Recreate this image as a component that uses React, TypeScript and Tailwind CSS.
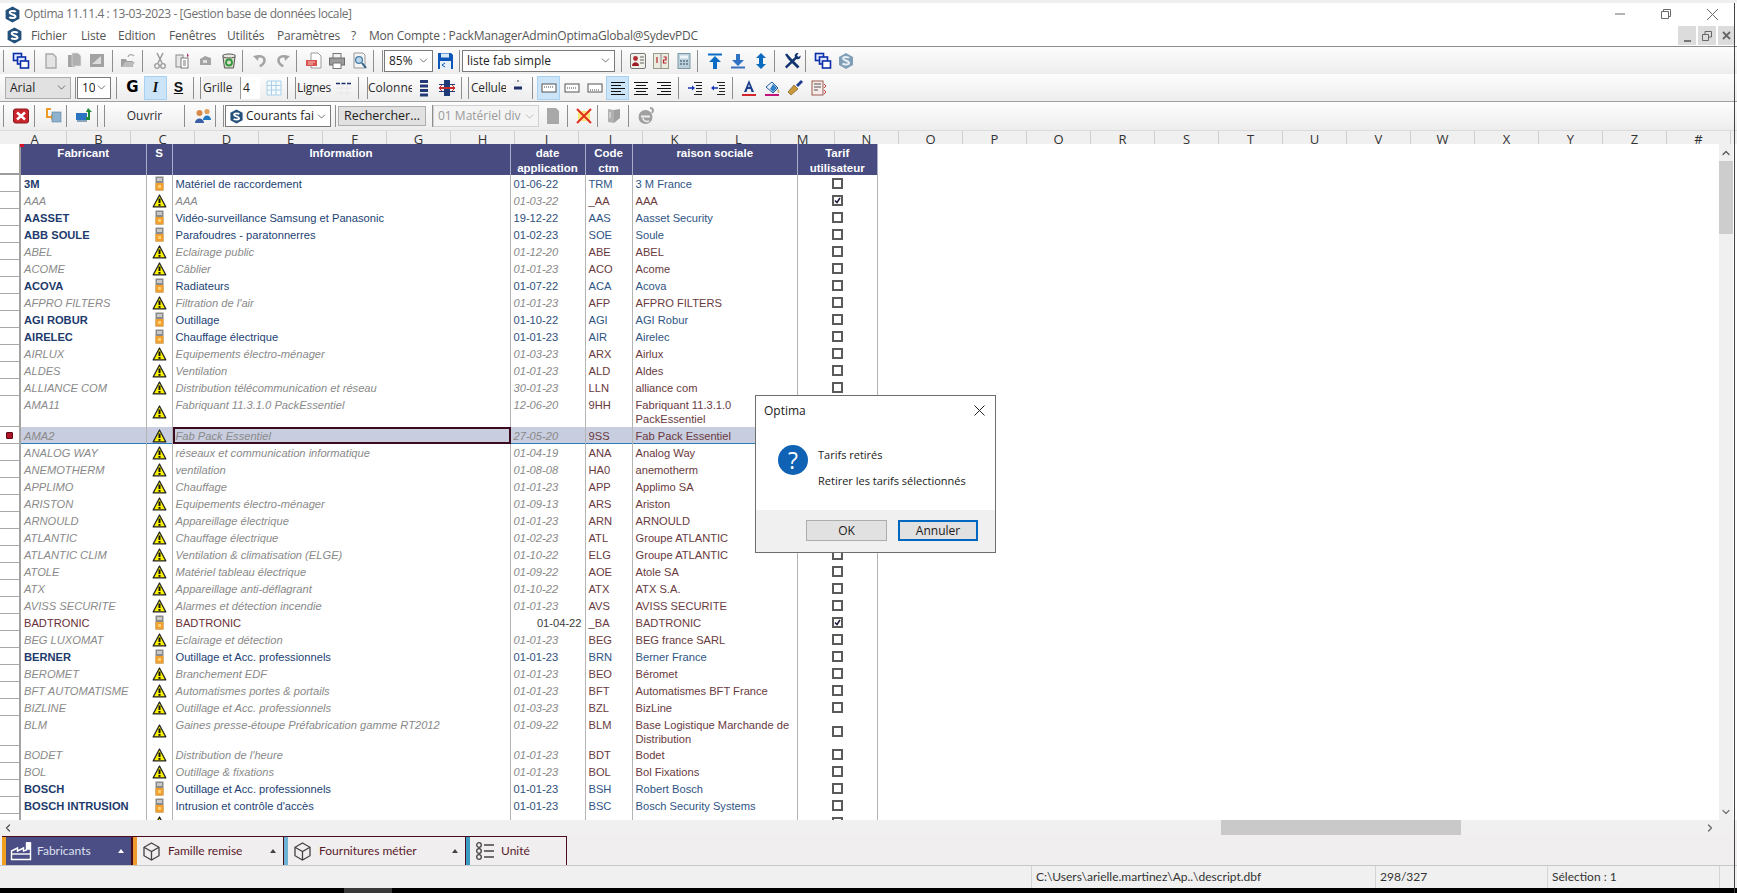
import type { ReactNode } from "react";
import { ChevronDown, ChevronLeft, ChevronRight, ChevronUp } from "lucide-react";

type Kind = "active" | "off" | "bad";

interface Row {
  name: string;
  info: string;
  date: string;
  code: string;
  raison: string;
  kind: Kind;
  checked?: boolean;
  height?: string;
  selected?: boolean;
}

const r = (name: string, info: string, date: string, code: string, raison: string, kind: Kind = "off", extra: Partial<Row> = {}): Row => ({
  name, info, date, code, raison, kind, ...extra,
});

const ROWS: Row[] = [
  r("3M", "Matériel de raccordement", "01-06-22", "TRM", "3 M France", "active"),
  r("AAA", "AAA", "01-03-22", "_AA", "AAA", "off", { checked: true }),
  r("AASSET", "Vidéo-surveillance Samsung et Panasonic", "19-12-22", "AAS", "Aasset Security", "active"),
  r("ABB SOULE", "Parafoudres - paratonnerres", "01-02-23", "SOE", "Soule", "active"),
  r("ABEL", "Eclairage public", "01-12-20", "ABE", "ABEL"),
  r("ACOME", "Câblier", "01-01-23", "ACO", "Acome"),
  r("ACOVA", "Radiateurs", "01-07-22", "ACA", "Acova", "active"),
  r("AFPRO FILTERS", "Filtration de l'air", "01-01-23", "AFP", "AFPRO FILTERS"),
  r("AGI ROBUR", "Outillage", "01-10-22", "AGI", "AGI Robur", "active"),
  r("AIRELEC", "Chauffage électrique", "01-01-23", "AIR", "Airelec", "active"),
  r("AIRLUX", "Equipements électro-ménager", "01-03-23", "ARX", "Airlux"),
  r("ALDES", "Ventilation", "01-01-23", "ALD", "Aldes"),
  r("ALLIANCE COM", "Distribution télécommunication et réseau", "30-01-23", "LLN", "alliance com"),
  r("AMA11", "Fabriquant 11.3.1.0 PackEssentiel", "12-06-20", "9HH", "Fabriquant 11.3.1.0 PackEssentiel", "off", { height: "h-[31px]" }),
  r("AMA2", "Fab Pack Essentiel", "27-05-20", "9SS", "Fab Pack Essentiel", "off", { selected: true }),
  r("ANALOG WAY", "réseaux et communication informatique", "01-04-19", "ANA", "Analog Way"),
  r("ANEMOTHERM", "ventilation", "01-08-08", "HA0", "anemotherm"),
  r("APPLIMO", "Chauffage", "01-01-23", "APP", "Applimo SA"),
  r("ARISTON", "Equipements électro-ménager", "01-09-13", "ARS", "Ariston"),
  r("ARNOULD", "Appareillage électrique", "01-01-23", "ARN", "ARNOULD"),
  r("ATLANTIC", "Chauffage électrique", "01-02-23", "ATL", "Groupe ATLANTIC"),
  r("ATLANTIC CLIM", "Ventilation & climatisation (ELGE)", "01-10-22", "ELG", "Groupe ATLANTIC"),
  r("ATOLE", "Matériel tableau électrique", "01-09-22", "AOE", "Atole SA"),
  r("ATX", "Appareillage anti-déflagrant", "01-10-22", "ATX", "ATX S.A."),
  r("AVISS SECURITE", "Alarmes et détection incendie", "01-01-23", "AVS", "AVISS SECURITE"),
  r("BADTRONIC", "BADTRONIC", "01-04-22", "_BA", "BADTRONIC", "bad", { checked: true }),
  r("BEG LUXOMAT", "Eclairage et détection", "01-01-23", "BEG", "BEG france SARL"),
  r("BERNER", "Outillage et Acc. professionnels", "01-01-23", "BRN", "Berner France", "active"),
  r("BEROMET", "Branchement EDF", "01-01-23", "BEO", "Béromet"),
  r("BFT AUTOMATISME", "Automatismes portes & portails", "01-01-23", "BFT", "Automatismes BFT France"),
  r("BIZLINE", "Outillage et Acc. professionnels", "01-03-23", "BZL", "BizLine"),
  r("BLM", "Gaines presse-étoupe Préfabrication gamme RT2012", "01-09-22", "BLM", "Base Logistique Marchande de Distribution", "off", { height: "h-[30px]" }),
  r("BODET", "Distribution de l'heure", "01-01-23", "BDT", "Bodet"),
  r("BOL", "Outillage & fixations", "01-01-23", "BOL", "Bol Fixations"),
  r("BOSCH", "Outillage et Acc. professionnels", "01-01-23", "BSH", "Robert Bosch", "active"),
  r("BOSCH INTRUSION", "Intrusion et contrôle d'accès", "01-01-23", "BSC", "Bosch Security Systems", "active"),
  r("", "", "", "", ""),
];

const LETTERS = "ABCDEFGHIJKLMNOPQRSTUVWXYZ#".split("");
const MENU: [string, string][] = [
  ["Fichier", "w-[50px]"],
  ["Liste", "w-[37px]"],
  ["Edition", "w-[51px]"],
  ["Fenêtres", "w-[58px]"],
  ["Utilités", "w-[50px]"],
  ["Paramètres", "w-[74px]"],
  ["?", "w-[18px]"],
  ["Mon Compte : PackManagerAdminOptimaGlobal@SydevPDC", ""],
];

function Logo({ size = 17 }: { size?: number }) {
  return (
    <svg width={size} height={size} viewBox="0 0 16 16">
      <path d="M8 0.5 14.5 4v8L8 15.5 1.5 12V4z" fill="#24507c" />
      <path d="M11 5.6C10 4.4 5.4 4.3 5.4 6.2 5.4 8.3 10.8 7.6 10.8 9.9 10.8 11.8 6.2 11.7 5 10.4" fill="none" stroke="#fff" strokeWidth="1.9" />
    </svg>
  );
}

const Svg = ({ children }: { children: ReactNode }) => (
  <svg width="18" height="18" viewBox="0 0 18 18">{children}</svg>
);

const I = {
  windows: (
    <Svg>
      <rect x="1.5" y="1.5" width="8" height="7" fill="#dfe8ff" stroke="#0b2ea8" strokeWidth="1.6" />
      <rect x="5.5" y="5" width="8" height="7" fill="#dfe8ff" stroke="#0b2ea8" strokeWidth="1.6" />
      <rect x="8.5" y="9" width="8" height="7" fill="#fff" stroke="#0b2ea8" strokeWidth="1.6" />
    </Svg>
  ),
  doc: (
    <Svg>
      <path d="M4 2h7l3 3v11H4z" fill="#e4e4e4" stroke="#a9a9a9" strokeWidth="1.4" />
    </Svg>
  ),
  copy: (
    <Svg>
      <path d="M3 3h7v12H3z" fill="#a3a3a3" />
      <path d="M7 1h6l3 3v10H7z" fill="#b0b0b0" stroke="#e8e8e8" strokeWidth=".6" />
    </Svg>
  ),
  save: (
    <Svg>
      <rect x="2" y="2" width="14" height="13" fill="#a2a2a2" />
      <path d="M4 12 13 4v8z" fill="#dcdcdc" />
    </Svg>
  ),
  open: (
    <Svg>
      <path d="M2 7h5l1 2h6v6H2z" fill="#a0a0a0" />
      <path d="M3 15l3-5h10l-3 5z" fill="#bcbcbc" />
      <path d="M9 5c1-3 4-3 6-1" fill="none" stroke="#a8a8a8" strokeWidth="1.3" />
    </Svg>
  ),
  cut: (
    <Svg>
      <path d="M6 1l5 10M12 1 7 11" stroke="#9a9a9a" strokeWidth="1.5" />
      <circle cx="6" cy="14" r="2.3" fill="none" stroke="#9a9a9a" strokeWidth="1.3" />
      <circle cx="12" cy="14" r="2.3" fill="none" stroke="#9a9a9a" strokeWidth="1.3" />
    </Svg>
  ),
  paste: (
    <Svg>
      <rect x="2" y="3" width="7" height="12" fill="#e8e8e8" stroke="#8a8a8a" />
      <rect x="7" y="6" width="7" height="10" fill="#fff" stroke="#7a7a7a" />
      <path d="M9 9h3M9 11h3M9 13h3" stroke="#777" />
      <path d="M13 1l2 3-2 1z" fill="#b03070" />
    </Svg>
  ),
  cam: (
    <Svg>
      <path d="M3 7l5-3 6 2v7H3z" fill="#a4a4a4" />
      <rect x="6" y="8" width="4" height="3" fill="#e0e0e0" />
    </Svg>
  ),
  recycle: (
    <Svg>
      <path d="M3 5h12l-1.5 11h-9z" fill="#dcdcc8" stroke="#555" />
      <ellipse cx="9" cy="4" rx="6.5" ry="2" fill="#e8e8dc" stroke="#555" />
      <circle cx="9" cy="10.5" r="3" fill="none" stroke="#2f9a3e" strokeWidth="1.8" />
    </Svg>
  ),
  undo: (
    <Svg>
      <path d="M5 5.5c5-3 10 0 8 5-1 2-3 3-4 4" fill="none" stroke="#a4a4a4" strokeWidth="2.6" />
      <path d="M2 4l6-1-1 6z" fill="#a4a4a4" />
    </Svg>
  ),
  redo: (
    <Svg>
      <path d="M13 5.5c-5-3-10 0-8 5 1 2 3 3 4 4" fill="none" stroke="#a4a4a4" strokeWidth="2.6" />
      <path d="M16 4l-6-1 1 6z" fill="#a4a4a4" />
    </Svg>
  ),
  pdf: (
    <Svg>
      <path d="M6 1h7l3 3v12H6z" fill="#fff" stroke="#9b9b9b" />
      <rect x="1" y="8" width="11" height="6" fill="#d9534f" />
      <path d="M3 10h7M3 12h5" stroke="#f7c5c3" strokeWidth="1" />
    </Svg>
  ),
  print: (
    <Svg>
      <rect x="5" y="1.5" width="8" height="5" fill="#f2f2f2" stroke="#777" />
      <rect x="1.5" y="6" width="15" height="7" fill="#9b9b9b" stroke="#6d6d6d" />
      <rect x="5" y="11" width="8" height="5.5" fill="#fff" stroke="#777" />
    </Svg>
  ),
  preview: (
    <Svg>
      <path d="M3 1h9l2 2v13H3z" fill="#f5f5f5" stroke="#999" />
      <circle cx="8" cy="8" r="3.4" fill="#bcd6ea" stroke="#4b7fa8" strokeWidth="1.3" />
      <path d="M11 11l4 5" stroke="#2c5d86" strokeWidth="2" />
    </Svg>
  ),
  floppy: (
    <Svg>
      <path d="M2 1h13l2 2v14H2z" fill="#0e55b8" />
      <rect x="5" y="1.5" width="8" height="4" fill="#d7ebf7" />
      <rect x="4" y="9" width="11" height="8" fill="#e6f1fa" />
      <path d="M9 11l-3 2 3 2" fill="none" stroke="#0e55b8" />
    </Svg>
  ),
  card: (
    <Svg>
      <rect x="1.5" y="1.5" width="15" height="15" rx="1.5" fill="#f0efe8" stroke="#777" />
      <path d="M11 5h4M11 8h4M11 11h4" stroke="#666" />
      <circle cx="6.5" cy="6.5" r="2.4" fill="#b12c35" />
      <path d="M3 14c0-5 7-5 7 0z" fill="#9c1d26" />
    </Svg>
  ),
  book: (
    <Svg>
      <rect x="1.5" y="1.5" width="15" height="15" fill="#ecebe0" stroke="#9a9a8a" />
      <path d="M9 2v14" stroke="#888" />
      <path d="M5 5v6M11.5 5h2.5v3h-2.5v3h3" fill="none" stroke="#b3262e" strokeWidth="1.2" />
    </Svg>
  ),
  calc: (
    <Svg>
      <rect x="3" y="1.5" width="12" height="15" fill="#bcd0dc" stroke="#7f98a8" />
      <rect x="5" y="3.5" width="8" height="3" fill="#eef5f8" />
      <path d="M5 9h2M8 9h2M11 9h2M5 12h2M8 12h2M11 12h2" stroke="#5c7484" strokeWidth="1.4" />
    </Svg>
  ),
  top: (
    <Svg>
      <path d="M2 2.5h14" stroke="#0a6cc4" strokeWidth="2" />
      <path d="M9 4l6 6h-4v7H7v-7H3z" fill="#0a6cc4" />
    </Svg>
  ),
  bottom: (
    <Svg>
      <path d="M2 15.5h14" stroke="#3a6fc0" strokeWidth="2" />
      <path d="M9 14l6-6h-4V2H7v6H3z" fill="#2f72c4" />
    </Svg>
  ),
  updown: (
    <Svg>
      <path d="M9 1l5 5h-3v6h3l-5 5-5-5h3V6H4z" fill="#0b6bbf" />
    </Svg>
  ),
  tools: (
    <Svg>
      <path d="M2 2.500 4 1.500 7 5 16.500 14.500 14.500 16.500 5 7z" fill="#12346e" />
      <path d="M15.500 1c-2.500-.5-4.500 1.500-3.500 4L2 14.500 3.500 16.500 13.500 7c2.500 1 4.500-1 4-3.500L15.500 5 14 3.500z" fill="#12346e" />
    </Svg>
  ),
  logoGray: (
    <Svg>
      <path d="M9 1l7 4v8l-7 4-7-4V5z" fill="#7f9fb8" />
      <path d="M12 6c-1-1.5-6-1.5-6 .5s6 2 6 4.500c0 2-5 2-6.500.5" fill="none" stroke="#e9f0f5" strokeWidth="2" />
    </Svg>
  ),
  grid: (
    <Svg>
      <path d="M2 2h14v14H2zM2 6.500h14M2 11h14M6.500 2v14M11 2v14" fill="#f5fafd" stroke="#a8d0ea" strokeWidth="1" />
    </Svg>
  ),
  lignes: (
    <Svg>
      <path d="M1 14h16M6 5v12M12 5v12M1 9h16" stroke="#e8e8e8" />
      <path d="M1 4.500h16" stroke="#1a2e6e" strokeWidth="1.500" strokeDasharray="4 1.500" />
    </Svg>
  ),
  colonne: (
    <Svg>
      <path d="M5 1h8v3H5zM5 5.500h8v3H5zM5 10h8v3H5zM5 14.500h8v3H5z" fill="#243a78" />
    </Svg>
  ),
  colonne2: (
    <Svg>
      <path d="M6 1h6v16H6z" fill="#1f3a78" />
      <path d="M1 5.500h16M1 12.500h16" stroke="#1f3a78" />
      <path d="M2 9h14" stroke="#c72c2c" strokeWidth="2" />
      <path d="M4 6l-3 3 3 3M14 6l3 3-3 3" fill="none" stroke="#c72c2c" />
    </Svg>
  ),
  cellule: (
    <Svg>
      <path d="M1 5h16M1 13h16M6 1v16M12 1v16" stroke="#ececec" />
      <rect x="5" y="7.500" width="8" height="3" fill="#1f2f6e" />
      <path d="M8 2h2" stroke="#333" />
    </Svg>
  ),
  box1: (
    <Svg>
      <rect x="2" y="5" width="14" height="8" fill="#fff" stroke="#555" />
      <path d="M4 8h10" stroke="#444" strokeDasharray="1 1" />
    </Svg>
  ),
  box2: (
    <Svg>
      <rect x="2" y="5" width="14" height="8" fill="#fff" stroke="#555" />
      <path d="M4 9h10" stroke="#444" strokeDasharray="1 1" />
    </Svg>
  ),
  box3: (
    <Svg>
      <rect x="2" y="5" width="14" height="8" fill="#fff" stroke="#555" />
      <path d="M4 11h10" stroke="#444" strokeDasharray="1 1" />
    </Svg>
  ),
  left: (
    <Svg>
      <path d="M2 3.500h14M2 6.500h10M2 9.500h14M2 12.500h10M2 15.500h14" stroke="#111" />
    </Svg>
  ),
  center: (
    <Svg>
      <path d="M2 3.500h14M4 6.500h10M2 9.500h14M4 12.500h10M2 15.500h14" stroke="#111" />
    </Svg>
  ),
  right: (
    <Svg>
      <path d="M2 3.500h14M6 6.500h10M2 9.500h14M6 12.500h10M2 15.500h14" stroke="#111" />
    </Svg>
  ),
  indent: (
    <Svg>
      <path d="M8 3.500h8M10 6.500h6M10 9.500h6M10 12.500h6M8 15.500h8" stroke="#222" />
      <path d="M2 9h5" stroke="#1236b8" strokeWidth="1.500" />
      <path d="M6 6.500 9 9l-3 2.500z" fill="#1236b8" />
    </Svg>
  ),
  outdent: (
    <Svg>
      <path d="M8 3.500h8M10 6.500h6M10 9.500h6M10 12.500h6M8 15.500h8" stroke="#222" />
      <path d="M4 9h5" stroke="#1236b8" strokeWidth="1.500" />
      <path d="M5 6.500 2 9l3 2.500z" fill="#1236b8" />
    </Svg>
  ),
  fontA: (
    <Svg>
      <path d="M9 1 4 13h2.500l1-3h3l1 3H14zM8.200 8 9 5l.8 3z" fill="#1b3f8f" />
      <rect x="2" y="15" width="14" height="2" fill="#d3262c" />
    </Svg>
  ),
  fill: (
    <Svg>
      <path d="M3 8l6-5 6 6-5 5z" fill="#eaf3fb" stroke="#225d9c" />
      <path d="M10 5l4 4-4 4-3-3z" fill="#3280c8" />
      <path d="M15 10c1 1.500 2 2.500 1 3.500s-2-1-1-3.500z" fill="#c9a24d" />
      <rect x="2" y="15" width="14" height="2" fill="#c2127c" />
    </Svg>
  ),
  brush: (
    <Svg>
      <path d="M10 6l5-5 2 2-5 5z" fill="#1f3f90" />
      <path d="M2 13l6-7 4 4-7 6z" fill="#c99a3d" stroke="#7a5a1c" strokeWidth=".7" />
    </Svg>
  ),
  report: (
    <Svg>
      <rect x="3" y="2" width="11" height="14" fill="#f7ecea" stroke="#9b5a52" />
      <path d="M5 5h7M5 8h7M5 11h4" stroke="#555" />
      <path d="M15 5l2 2-2 2M15 11l2 2-2 2" fill="none" stroke="#c2413b" />
    </Svg>
  ),
  close: (
    <Svg>
      <rect x="1.500" y="2" width="15" height="14" rx="2" fill="#c9252d" stroke="#8d1a1e" />
      <path d="M5 5.500l8 7M13 5.500l-8 7" stroke="#fff" strokeWidth="2.400" />
    </Svg>
  ),
  importer: (
    <Svg>
      <path d="M2 2h5M3 2v8h5" fill="none" stroke="#ed9b26" strokeWidth="2" />
      <path d="M7 7v6l3-3z" fill="#ed9b26" />
      <rect x="8" y="5" width="9" height="10" fill="#8fb3cf" stroke="#5d7f9b" strokeWidth=".6" />
    </Svg>
  ),
  exporter: (
    <Svg>
      <rect x="1" y="6" width="11" height="7" fill="#2a74c0" />
      <rect x="2" y="13" width="10" height="2" fill="#8aa4bc" />
      <path d="M13 1l4 4h-2v8h-4v-3h2V5h-2z" fill="#1f8a3a" />
    </Svg>
  ),
  people: (
    <Svg>
      <circle cx="5.500" cy="6" r="3" fill="#d98a4a" />
      <path d="M1 16c0-6 9-6 9 0z" fill="#3a5fa8" />
      <circle cx="13" cy="4.500" r="2.600" fill="#e0a060" />
      <path d="M9 13c0-6 8-6 8 0z" fill="#2378c4" />
    </Svg>
  ),
  grayDoc: (
    <Svg>
      <path d="M3 1h9l3 3v13H3z" fill="#a8a8a8" />
    </Svg>
  ),
  cross: (
    <Svg>
      <path d="M3 4h12v10H3z" fill="#fbe87a" />
      <path d="M2 2l14 14M16 2 2 16" stroke="#e12c20" strokeWidth="2" />
    </Svg>
  ),
  grayBook: (
    <Svg>
      <path d="M3 2l6 1v13l-6-1z" fill="#b0b0b0" />
      <path d="M9 3l6-1v9l-6 5z" fill="#a0a0a0" />
      <path d="M5 5v6" stroke="#eee" />
    </Svg>
  ),
  globe: (
    <Svg>
      <circle cx="8.500" cy="10" r="7" fill="#a0a0a0" />
      <path d="M4 9.500h9" stroke="#eee" strokeWidth="2" />
      <path d="M12 14c-3 1-6 0-6-3" fill="none" stroke="#eee" strokeWidth="1.500" />
      <path d="M13 1c3 0 4 2 2 5" fill="none" stroke="#a0a0a0" strokeWidth="2" />
    </Svg>
  ),
};

const Sep = ({ className = "" }: { className?: string }) => (
  <span className={`w-px h-[22px] shrink-0 bg-[#8e8e8e] ${className}`} />
);

const Ico = ({ className = "", children, on }: { className?: string; children: ReactNode; on?: boolean }) => (
  <span className={`w-[23px] h-[24px] shrink-0 flex items-center justify-center ${on ? "bg-[#cce4f7] border border-[#a8d0f0]" : ""} ${className}`}>
    {children}
  </span>
);

const Label = ({ className = "", children }: { className?: string; children: ReactNode }) => (
  <span className={`shrink-0 text-[12px] leading-[24px] text-[#2c2c2c] [font-family:Open_Sans,sans-serif] overflow-hidden whitespace-nowrap ${className}`}>
    {children}
  </span>
);

function Combo({ className = "", text, gray, disabled, logo }: { className?: string; text: string; gray?: boolean; disabled?: boolean; logo?: boolean }) {
  const skin = gray ? "bg-[#e1e1e1] border-[#adadad]" : disabled ? "bg-[#f4f4f4] border-[#d0d0d0]" : "bg-white border-[#7a7a7a]";
  return (
    <span className={`h-[22px] shrink-0 flex items-center border pl-[4px] pr-[2px] ${skin} ${className}`}>
      {logo && <span className="mr-[2px] shrink-0"><Logo size={15} /></span>}
      <span className={`flex-1 overflow-hidden whitespace-nowrap text-[12px] [font-family:Open_Sans,sans-serif] ${disabled ? "text-[#9a9a9a]" : "text-[#222]"}`}>{text}</span>
      <ChevronDown className={`w-[13px] h-[13px] shrink-0 ${disabled ? "text-[#b0b0b0]" : "text-[#555]"}`} strokeWidth={1.5} />
    </span>
  );
}

function Warning() {
  return (
    <svg width="15" height="14" viewBox="0 0 15 14">
      <path d="M7.500 1 13.800 12.900H1.200z" fill="#fbf200" stroke="#222" strokeWidth="1.200" strokeLinejoin="round" />
      <path d="M7.500 4.500v4.500" stroke="#111" strokeWidth="2" />
      <rect x="6.500" y="10" width="2" height="1.800" fill="#111" />
    </svg>
  );
}

function Battery() {
  return (
    <svg width="9" height="15" viewBox="0 0 9 15">
      <rect x="0.500" y="0.500" width="8" height="14" fill="#8a8a8a" />
      <rect x="2" y="2" width="5" height="3" fill="#c8c8c8" />
      <rect x="0.500" y="7" width="8" height="7.500" fill="#f0a030" />
      <rect x="3" y="9" width="3" height="3" fill="#ffd070" />
    </svg>
  );
}

function Checkbox({ checked }: { checked?: boolean }) {
  return (
    <span className="w-[11px] h-[11px] border-2 border-[#5a5a5a] bg-white flex items-center justify-center">
      {checked && (
        <svg width="7" height="7" viewBox="0 0 7 7">
          <path d="M1 3.500 3 5.500 6 1" fill="none" stroke="#1a1a3a" strokeWidth="1.500" />
        </svg>
      )}
    </span>
  );
}

function GridRow({ row }: { row: Row }) {
  const h = row.height ?? "h-[17px]";
  const isOff = row.kind === "off";
  const nameCls = row.kind === "active" ? "font-bold text-[#1c3a6c]" : isOff ? "italic text-[#8a8a8a]" : "text-[#6a2f35]";
  const infoCls = row.kind === "active" ? "text-[#1c3f74]" : isOff ? "italic text-[#8a8a8a]" : "text-[#6a2f35]";
  const dateCls = row.kind === "active" ? "text-[#2f4f7c]" : isOff ? "italic text-[#8a8a8a]" : "text-[#3c3c3c] text-right";
  const codeCls = row.kind === "active" ? "text-[#2f5585]" : "text-[#6a3a3e]";
  const line = "border-r border-[#b4b4b4] h-full overflow-hidden px-[3px] pt-[2px] shrink-0";
  return (
    <div className={`flex w-fit text-[11.15px] leading-[15px] ${h} ${row.selected ? "bg-[#c8cddf] shadow-[inset_0_-1px_0_#2b7cb4]" : ""}`}>
      <div className="w-[21px] h-full shrink-0 bg-white border-r-2 border-[#a4a4a4] flex">
        <span className="w-[19px] h-full border-b border-[#a8a8a8] flex items-center justify-center">
          {row.selected && <span className="w-[7px] h-[7px] rounded-[1px] bg-[#b0122a] border border-[#5a0a14]" />}
        </span>
      </div>
      <div className={`w-[125.5px] ${line} ${nameCls}`}>{row.name}</div>
      <div className={`w-[26px] ${line} !pt-0 !px-0 flex items-center justify-center`}>
        {isOff ? <Warning /> : <Battery />}
      </div>
      <div className={`w-[338px] ${line} ${infoCls} ${row.selected ? "outline-2 -outline-offset-2 outline-[#3a0a1e]" : ""}`}>{row.info}</div>
      <div className={`w-[75px] ${line} ${dateCls}`}>{row.date}</div>
      <div className={`w-[47px] ${line} ${codeCls}`}>{row.code}</div>
      <div className={`w-[165.5px] ${line} ${row.height ? "leading-[14px]" : ""} ${codeCls}`}>{row.raison}</div>
      <div className={`w-[79.5px] ${line} !pt-0 flex items-center justify-center`}>
        <Checkbox checked={row.checked} />
      </div>
    </div>
  );
}

function HeaderCell({ className, children }: { className: string; children: ReactNode }) {
  return (
    <div className={`h-full shrink-0 bg-[#474b80] border-r border-[#a9abc8] text-center text-white font-bold leading-[15px] pt-[2px] ${className}`}>
      {children}
    </div>
  );
}

function Tab({ strip, label, width, icon, active, caret = true }: { strip: string; label: string; width: string; icon: ReactNode; active?: boolean; caret?: boolean }) {
  return (
    <div className={`${width} h-full shrink-0 flex items-center border-t border-r border-[#4a0d1e] ${active ? "bg-[#4a4e85] text-[#dfe0ee] border-r-2" : "text-[#5a1a2c]"}`}>
      <span className={`w-[4px] h-full shrink-0 ${strip}`} />
      <span className="w-[27px] ml-[1px] shrink-0 flex justify-center">{icon}</span>
      <span className="ml-[3px] flex-1 text-[12px] [font-family:Lato,sans-serif]">{label}</span>
      {caret && <span className={`mr-[7px] w-0 h-0 border-x-[3px] border-x-transparent border-b-[4px] ${active ? "border-b-white" : "border-b-[#444]"}`} />}
    </div>
  );
}

const BoxIcon = (
  <svg width="21" height="21" viewBox="0 0 21 21" fill="none" stroke="#444" strokeWidth="1.300">
    <path d="M10.500 2 18 6.300v8.400L10.500 19 3 14.700V6.300z" />
    <path d="M3 6.300l7.500 4.300L18 6.300M10.500 10.600V19" />
  </svg>
);

export default function App() {
  return (
    <div className="relative w-[1737px] h-[893px] overflow-hidden bg-white flex flex-col [font-family:Liberation_Sans,Arial,sans-serif] text-[11px] border-t-[3px] border-[#efefef]">
      {/* window title */}
      <div className="h-[22px] shrink-0 flex items-center text-[#6f6f6f] text-[12px] [font-family:Open_Sans,sans-serif]">
        <span className="ml-[3px] w-[19px] flex justify-center"><Logo /></span>
        <span className="ml-[2px] flex-1 tracking-[-0.4px]">Optima 11.11.4 : 13-03-2023 - [Gestion base de données locale]</span>
        <svg className="mr-[36px]" width="10" height="10" viewBox="0 0 10 10"><path d="M0 5h10" stroke="#6a6a6a" /></svg>
        <svg className="mr-[36px]" width="10" height="10" viewBox="0 0 10 10" fill="none" stroke="#6a6a6a"><path d="M.5 2.500h7v7h-7zM2.500 2.500v-2h7v7h-2" /></svg>
        <svg className="mr-[19px]" width="11" height="11" viewBox="0 0 11 11"><path d="M0 0l11 11M11 0 0 11" stroke="#6a6a6a" /></svg>
      </div>

      {/* menu */}
      <div className="h-[22px] shrink-0 flex items-center border-b border-[#8e8e8e] text-[#555] text-[12px] tracking-[-0.2px] [font-family:Open_Sans,sans-serif]">
        <span className="ml-[6px] w-[25px] flex"><Logo /></span>
        {MENU.map(([label, w]) => (
          <span key={label} className={`${w} whitespace-nowrap`}>{label}</span>
        ))}
        <span className="ml-auto flex h-[19px] mr-[3px] gap-[2px] text-[#666]">
          <span className="w-[18px] bg-[#dcdcdc] flex items-end justify-center pb-[3px]"><span className="w-[7px] h-[2px] bg-[#777]" /></span>
          <span className="w-[18px] bg-[#dcdcdc] flex items-center justify-center">
            <svg width="10" height="10" viewBox="0 0 10 10" fill="none" stroke="#666"><path d="M.5 3.500h6v6h-6zM3 3V.5h6.500V6H7" /></svg>
          </span>
          <span className="w-[16px] bg-[#dcdcdc] flex items-center justify-center">
            <svg width="9" height="9" viewBox="0 0 9 9"><path d="M1 1l7 7M8 1 1 8" stroke="#666" strokeWidth="1.800" /></svg>
          </span>
        </span>
      </div>

      {/* toolbar 1 */}
      <div className="h-[27px] shrink-0 flex items-center bg-gradient-to-b from-[#fdfdfd] to-[#eeeded]">
        <Sep className="ml-[3px]" />
        <Ico className="ml-[5px]">{I.windows}</Ico>
        <Sep className="ml-[2px]" />
        <Ico className="ml-[4px]">{I.doc}</Ico>
        <Ico>{I.copy}</Ico>
        <Ico>{I.save}</Ico>
        <Sep className="ml-[4px]" />
        <Ico className="ml-[3px]">{I.open}</Ico>
        <Sep className="ml-[3px]" />
        <Ico className="ml-[5px]">{I.cut}</Ico>
        <Ico>{I.paste}</Ico>
        <Ico>{I.cam}</Ico>
        <Ico>{I.recycle}</Ico>
        <Sep className="ml-[2px]" />
        <Ico className="ml-[5px]">{I.undo}</Ico>
        <Ico>{I.redo}</Ico>
        <Sep className="ml-[2px]" />
        <Ico className="ml-[5px]">{I.pdf}</Ico>
        <Ico>{I.print}</Ico>
        <Ico>{I.preview}</Ico>
        <Sep className="ml-[2px]" />
        <Sep className="ml-[8px]" />
        <Combo className="ml-[1px] w-[49px]" text="85%" />
        <Ico>{I.floppy}</Ico>
        <Sep className="ml-[3px]" />
        <Combo className="ml-[2px] w-[153px]" text="liste fab simple" />
        <Sep className="ml-[6px]" />
        <Ico className="ml-[4px]">{I.card}</Ico>
        <Ico>{I.book}</Ico>
        <Ico>{I.calc}</Ico>
        <Sep className="ml-[2px]" />
        <Ico className="ml-[5px]">{I.top}</Ico>
        <Ico>{I.bottom}</Ico>
        <Ico>{I.updown}</Ico>
        <Sep className="ml-[2px]" />
        <Ico className="ml-[5px]">{I.tools}</Ico>
        <Sep className="ml-[2px]" />
        <Ico className="ml-[5px]">{I.windows}</Ico>
        <Ico>{I.logoGray}</Ico>
      </div>

      {/* toolbar 2 */}
      <div className="h-[28px] shrink-0 flex items-center border-b border-[#a0a0a0] bg-gradient-to-b from-[#fdfdfd] to-[#eeeded]">
        <Combo className="ml-[5px] w-[66px]" text="Arial" gray />
        <Sep className="ml-[4px]" />
        <Combo className="ml-[1px] w-[34px]" text="10" />
        <Sep className="ml-[5px]" />
        <Ico className="ml-[4px] font-bold text-[15px] text-black [font-family:DejaVu_Sans,sans-serif]">G</Ico>
        <Ico on className="italic font-bold text-[14px] text-[#111] [font-family:Liberation_Serif,serif]">I</Ico>
        <Ico className="font-bold underline text-[14px] text-[#111]">S</Ico>
        <Sep className="ml-[3px]" />
        <Sep className="ml-[6px]" />
        <Label className="ml-[2px] w-[37px] bg-[#f3f2f2]">Grille</Label>
        <span className="w-[20px] h-[22px] shrink-0 bg-white border-l border-[#9a9a9a] pl-[2px] text-[12px] leading-[22px] text-[#222] [font-family:Open_Sans,sans-serif]">4</span>
        <Ico className="ml-[2px]">{I.grid}</Ico>
        <Sep className="ml-[2px]" />
        <Sep className="ml-[7px]" />
        <Label className="ml-[1px] w-[35px] tracking-[-0.3px]">Lignes</Label>
        <Ico>{I.lignes}</Ico>
        <Sep className="ml-[3px]" />
        <Sep className="ml-[8px]" />
        <Label className="w-[44px]">Colonne</Label>
        <Ico>{I.colonne}</Ico>
        <Ico>{I.colonne2}</Ico>
        <Sep className="ml-[3px]" />
        <Sep className="ml-[6px]" />
        <Label className="ml-[2px] w-[35px] tracking-[-0.2px]">Cellule</Label>
        <Ico>{I.cellule}</Ico>
        <Sep className="ml-[3px]" />
        <Ico on className="ml-[4px]">{I.box1}</Ico>
        <Ico>{I.box2}</Ico>
        <Ico>{I.box3}</Ico>
        <Ico on>{I.left}</Ico>
        <Ico>{I.center}</Ico>
        <Ico>{I.right}</Ico>
        <Sep className="ml-[3px]" />
        <Ico className="ml-[4px]">{I.indent}</Ico>
        <Ico>{I.outdent}</Ico>
        <Sep className="ml-[3px]" />
        <Ico className="ml-[4px]">{I.fontA}</Ico>
        <Ico>{I.fill}</Ico>
        <Ico>{I.brush}</Ico>
        <Ico>{I.report}</Ico>
      </div>

      {/* toolbar 3 */}
      <div className="h-[28px] shrink-0 flex items-center bg-gradient-to-b from-[#fdfdfd] to-[#eeeded]">
        <Sep className="ml-[3px]" />
        <Ico className="ml-[5px]">{I.close}</Ico>
        <Sep className="ml-[2px]" />
        <Ico className="ml-[6px]">{I.importer}</Ico>
        <Sep className="ml-[2px]" />
        <Ico className="ml-[5px]">{I.exporter}</Ico>
        <Sep className="ml-[2px]" />
        <Sep className="ml-[6px]" />
        <Label className="w-[79px] text-center">Ouvrir</Label>
        <Sep />
        <Ico className="ml-[6px]">{I.people}</Ico>
        <Sep className="ml-[1px]" />
        <Sep className="ml-[7px]" />
        <Combo className="ml-[1px] w-[106px] !pl-[3px]" text="Courants fai" logo />
        <Sep className="ml-[4px]" />
        <span className="ml-[2px] w-[88px] h-[20px] shrink-0 bg-[#e1e1e1] border border-[#adadad] text-center text-[12.5px] leading-[18px] text-[#222] [font-family:Open_Sans,sans-serif]">Rechercher...</span>
        <Sep className="ml-[6px]" />
        <Combo className="w-[106px]" text="01 Matériel div" disabled />
        <Ico className="ml-[2px]">{I.grayDoc}</Ico>
        <Sep className="ml-[3px]" />
        <Ico className="ml-[4px]">{I.cross}</Ico>
        <Sep className="ml-[2px]" />
        <Ico className="ml-[4px]">{I.grayBook}</Ico>
        <Sep className="ml-[3px]" />
        <Ico className="ml-[5px]">{I.globe}</Ico>
      </div>

      {/* spreadsheet letters */}
      <div className="h-[14px] shrink-0 flex pl-[3px] bg-[#f0f0f0] border-t border-[#dcdcdc] overflow-hidden">
        {LETTERS.map((l) => (
          <span key={l} className="w-[64px] shrink-0 h-full text-center border-r border-[#cfcfcf] text-[13px] leading-[16px] text-[#333] [font-family:Open_Sans,sans-serif]">{l}</span>
        ))}
      </div>

      {/* grid + vertical scrollbar */}
      <div className="h-[676px] shrink-0 flex">
        <div className="w-[1719px] shrink-0 overflow-hidden text-[11.5px]">
          <div className="flex h-[31px]">
            <div className="relative w-[21px] h-full shrink-0 bg-white border-r-2 border-b-2 border-[#9c9c9c]">
              <span className="absolute right-[-5px] top-0 w-[4px] h-[3px] bg-[#d5122a]" />
            </div>
            <HeaderCell className="w-[125.5px]">Fabricant</HeaderCell>
            <HeaderCell className="w-[26px]">S</HeaderCell>
            <HeaderCell className="w-[338px]">Information</HeaderCell>
            <HeaderCell className="w-[75px]">date<br />application</HeaderCell>
            <HeaderCell className="w-[47px]">Code<br />ctm</HeaderCell>
            <HeaderCell className="w-[165.5px]">raison sociale</HeaderCell>
            <HeaderCell className="w-[79.5px]">Tarif<br />utilisateur</HeaderCell>
          </div>
          {ROWS.map((row, i) => (
            <GridRow key={i} row={row} />
          ))}
        </div>
        <div className="w-[14px] shrink-0 bg-[#f0f0f0] flex flex-col items-center">
          <span className="h-[17px] flex items-center"><ChevronUp className="w-[12px] h-[12px] text-[#555]" strokeWidth={2.5} /></span>
          <span className="h-[73px] w-full bg-[#cdcdcd]" />
          <span className="mt-auto h-[17px] flex items-center"><ChevronDown className="w-[12px] h-[12px] text-[#777]" strokeWidth={2.5} /></span>
        </div>
      </div>

      {/* horizontal scrollbar */}
      <div className="h-[15px] shrink-0 flex items-center bg-[#f0f0f0]">
        <span className="w-[16px] flex justify-center"><ChevronLeft className="w-[12px] h-[12px] text-[#555]" strokeWidth={2.5} /></span>
        <span className="ml-[1205px] w-[240px] h-full bg-[#c9c9c9]" />
        <span className="ml-[242px] w-[14px] flex justify-center"><ChevronRight className="w-[12px] h-[12px] text-[#666]" strokeWidth={2.5} /></span>
      </div>

      {/* tabs */}
      <div className="h-[31px] shrink-0 flex pt-px pl-[2px] bg-[#f0eeee] border-b border-[#c8c8c8]">
        <Tab
          width="w-[131px]"
          strip="bg-[#f0a020]"
          label="Fabricants"
          active
          icon={
            <svg width="22" height="20" viewBox="0 0 22 20" fill="none" stroke="#fff" strokeWidth="1.400">
              <path d="M1.500 18.500V10l6-3v3l6-3v3l3-1V2h4v16.500z" />
              <path d="M17 2h3v6h-3z" fill="#fff" />
              <path d="M1.500 13h19" />
            </svg>
          }
        />
        <Tab width="w-[151px]" strip="bg-[#ef9a2e]" label="Famille remise" icon={BoxIcon} />
        <Tab width="w-[182px]" strip="bg-[#6fb4d4]" label="Fournitures métier" icon={BoxIcon} />
        <Tab
          width="w-[101px]"
          strip="bg-[#3a9cc2]"
          label="Unité"
          caret={false}
          icon={
            <svg width="20" height="20" viewBox="0 0 20 20" fill="none" stroke="#444" strokeWidth="1.300">
              <circle cx="4" cy="4" r="2.300" />
              <circle cx="4" cy="10" r="2.300" />
              <circle cx="4" cy="16" r="2.300" />
              <path d="M9 4h10M9 10h10M9 16h10" />
            </svg>
          }
        />
      </div>

      {/* status bar */}
      <div className="h-[22px] shrink-0 flex bg-[#f0f0f0] text-[12px] text-[#333] [font-family:Lato,sans-serif] leading-[22px]">
        <span className="w-[1032px] border-r border-[#d4d4d4]" />
        <span className="w-[344px] pl-[4px] border-r border-[#d4d4d4]">C:\Users\arielle.martinez\Ap..\descript.dbf</span>
        <span className="w-[172px] pl-[4px] border-r border-[#d4d4d4]">298/327</span>
        <span className="w-[172px] pl-[4px] border-r border-[#d4d4d4]">Sélection : 1</span>
      </div>
      <div className="flex-1 bg-black flex">
        <span className="ml-[344px] w-[48px] h-full bg-[#3a3a3a]" />
      </div>

      <div className="absolute right-[2px] top-0 bottom-0 w-px bg-[#444]" />

      {/* message box */}
      <div className="absolute left-[755px] top-[392px] w-[241px] h-[158px] bg-white border border-[#6e6e6e] flex flex-col [font-family:Open_Sans,sans-serif] text-[12px] text-[#1a1a1a]">
        <div className="h-[29px] flex items-center justify-between pl-[8px] pr-[10px]">
          <span>Optima</span>
          <svg width="11" height="11" viewBox="0 0 11 11"><path d="M.5.5l10 10M10.500.5l-10 10" stroke="#222" /></svg>
        </div>
        <div className="flex-1 flex pl-[22px] pt-[20px]">
          <span className="w-[30px] h-[30px] rounded-full bg-[#0f62b4] text-white text-[23px] leading-[30px] text-center shrink-0">?</span>
          <div className="ml-[10px] mt-[2px] text-[11px]">
            <p className="leading-[16px]">Tarifs retirés</p>
            <p className="leading-[16px] mt-[10px]">Retirer les tarifs sélectionnés</p>
          </div>
        </div>
        <div className="h-[42px] bg-[#f0f0f0] flex items-start pt-[10px] pl-[50px] gap-[11px] text-[12px]">
          <span className="w-[81px] h-[21px] bg-[#e1e1e1] border border-[#adadad] text-center leading-[19px]">OK</span>
          <span className="w-[80px] h-[21px] bg-[#e1e1e1] border-2 border-[#0067c0] text-center leading-[17px]">Annuler</span>
        </div>
      </div>
    </div>
  );
}
